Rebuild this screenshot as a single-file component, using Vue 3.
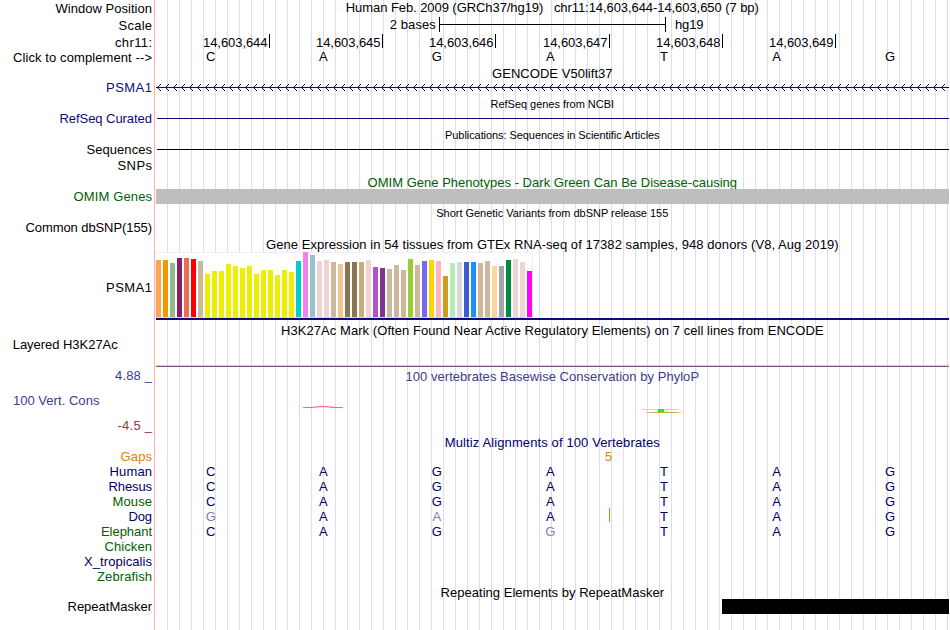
<script setup>
const NAVY = '#0c0c78';
const DEEP = '#000064';
const GREEN = '#006000';
const ORANGE = '#e68200';

// x values are local to the plot column, which starts at the pink divider
const GRID_LINES = Array.from({ length: 66 }, (_, i) => 12 + i * 12);
const ARROWS = Array.from({ length: 99 }, (_, i) => 2 + i * 8);
const BASE_X = [55.7, 168.3, 281.9, 395.3, 508.9, 621.5, 735];

const coords = [
    { text: '14,603,644', x: 114 },
    { text: '14,603,645', x: 227 },
    { text: '14,603,646', x: 340 },
    { text: '14,603,647', x: 454 },
    { text: '14,603,648', x: 567 },
    { text: '14,603,649', x: 680 },
];

const tissues = [
    ['#ffa54f', 57], ['#ee9a00', 57], ['#8fbc8f', 54], ['#8b1c62', 59], ['#ee6a50', 59], ['#ff0000', 58],
    ['#cdb79e', 56], ['#eeee00', 43], ['#eeee00', 46], ['#eeee00', 46], ['#eeee00', 53], ['#eeee00', 51],
    ['#eeee00', 49], ['#eeee00', 51], ['#eeee00', 43], ['#eeee00', 47], ['#eeee00', 47], ['#eeee00', 42],
    ['#eeee00', 47], ['#eeee00', 45], ['#00cdcd', 56], ['#ee82ee', 65], ['#9ac0cd', 62], ['#eed5d2', 56],
    ['#eed5d2', 57], ['#cdb79e', 55], ['#eec591', 53], ['#8b7355', 55], ['#8b7355', 55], ['#cdaa7d', 55],
    ['#eed5d2', 57], ['#b452cd', 50], ['#7a378b', 49], ['#cdb79e', 48], ['#cdb79e', 52], ['#cdb79e', 47],
    ['#9acd32', 58], ['#cdb79e', 52], ['#7a67ee', 56], ['#ffd700', 57], ['#ffb6c1', 56], ['#cd9b1d', 41],
    ['#b4eeb4', 54], ['#d9d9d9', 55], ['#3a5fcd', 55], ['#1e90ff', 55], ['#cdb79e', 54], ['#cdb79e', 56],
    ['#ffd39b', 51], ['#a6a6a6', 51], ['#008b45', 57], ['#eed5d2', 58], ['#eed5d2', 55], ['#ff00ff', 46],
];

const label = (text, w, y = 12, color = '#000', x = null) => ({ text, w, y, color, x });
const title = (text, w, y = 12, color = '#000', small = false) => ({ text, w, y, color, small });

const species = [
    ['Human', 42.5, DEEP, 'CAGATAG', ''],
    ['Rhesus', 43.5, DEEP, 'CAGATAG', ''],
    ['Mouse', 39.5, GREEN, 'CAGATAG', ''],
    ['Dog', 23.5, DEEP, 'GAAATAG', '02'],
    ['Elephant', 51, GREEN, 'CAGGTAG', '3'],
    ['Chicken', 47.5, GREEN, '', ''],
    ['X_tropicalis', 68, DEEP, '', ''],
    ['Zebrafish', 55, GREEN, '', ''],
];

const rows = [
    {
        h: 16,
        labels: [label('Window Position', 96.5, 13)],
        title: title('Human Feb. 2009 (GRCh37/hg19)   chr11:14,603,644-14,603,650 (7 bp)', 413),
    },
    { h: 17, labels: [label('Scale', 33.5, 14)], kind: 'scale' },
    { h: 17, labels: [label('chr11:', 37, 14)], kind: 'coords' },
    { h: 16, labels: [label('Click to complement -->', 139)], kind: 'bases', bases: 'CAGATAG', y: 11, color: '#000', dim: '' },
    { h: 14, title: title('GENCODE V50lift37', 120.5) },
    { h: 17, labels: [label('PSMA1', 46, 12, NAVY)], kind: 'gene' },
    { h: 14, title: title('RefSeq genes from NCBI', 123.5, 11, '#000', true) },
    { h: 16, labels: [label('RefSeq Curated', 92.5, 12, NAVY)], kind: 'line', color: NAVY },
    { h: 15, title: title('Publications: Sequences in Scientific Articles', 214.5, 12, '#000', true) },
    { h: 16, labels: [label('Sequences', 65.5)], kind: 'line', color: '#000' },
    { h: 16, labels: [label('SNPs', 34.5)] },
    { h: 15, title: title('OMIM Gene Phenotypes - Dark Green Can Be Disease-causing', 369.5, 13, GREEN) },
    { h: 16, labels: [label('OMIM Genes', 78.5, 12, GREEN)], kind: 'block', x: 1, color: '#bebebe' },
    { h: 15, title: title('Short Genetic Variants from dbSNP release 155', 232, 12, '#000', true) },
    { h: 17, labels: [label('Common dbSNP(155)', 126.5)] },
    { h: 15, title: title('Gene Expression in 54 tissues from GTEx RNA-seq of 17382 samples, 948 donors (V8, Aug 2019)', 572.5) },
    { h: 68, labels: [label('PSMA1', 46, 40)], kind: 'gtex' },
    { h: 18, title: title('H3K27Ac Mark (Often Found Near Active Regulatory Elements) on 7 cell lines from ENCODE', 542.5, 15) },
    { h: 29, labels: [label('Layered H3K27Ac', 105, 11, '#000', 12.7)], kind: 'h3k' },
    {
        h: 18,
        labels: [label('4.88 _', 37, 13, '#3c3c8c')],
        title: title('100 vertebrates Basewise Conservation by PhyloP', 293.5, 14, '#3c3c8c'),
    },
    {
        h: 49,
        labels: [label('100 Vert. Cons', 86.5, 20, '#3c3c8c', 12.9), label('-4.5 _', 34.5, 45, '#8c3c3c')],
        kind: 'phylop',
    },
    { h: 15, title: title('Multiz Alignments of 100 Vertebrates', 215, 13, DEEP) },
    { h: 15, labels: [label('Gaps', 31.5, 12, ORANGE)], kind: 'gaps' },
    ...species.map(([name, w, color, bases, dim]) => ({
        h: 15,
        labels: [label(name, w, 12, color)],
        kind: 'bases',
        bases,
        y: 12,
        color: DEEP,
        dim,
        insert: name === 'Dog',
    })),
    { h: 15, title: title('Repeating Elements by RepeatMasker', 223.5, 13) },
    { h: 31, labels: [label('RepeatMasker', 84.5)], kind: 'block', x: 567, color: '#000' },
];
</script>

<template>
    <main class="browser">
        <svg class="guides" width="794" height="630" aria-hidden="true">
            <rect x="-1" width="1" height="630" fill="#ffb0b0" />
            <rect v-for="x in GRID_LINES" :key="x" :x="x" width="1" height="630" fill="#dcdcfa" />
        </svg>

        <section v-for="(row, i) in rows" :key="i" class="track" :style="{ height: row.h + 'px' }">
            <svg class="side" width="155" :height="row.h">
                <text
                    v-for="l in row.labels"
                    :key="l.text"
                    :x="l.x ?? 152 - l.w"
                    :y="l.y"
                    :fill="l.color"
                    :textLength="l.w"
                >{{ l.text }}</text>
            </svg>

            <svg class="plot" width="794" :height="row.h">
                <text
                    v-if="row.title"
                    :class="{ small: row.title.small }"
                    :x="397.3 - row.title.w / 2"
                    :y="row.title.y"
                    :fill="row.title.color"
                    :textLength="row.title.w"
                >{{ row.title.text }}</text>

                <g v-if="row.kind === 'scale'">
                    <text x="234.8" y="13" textLength="46">2 bases</text>
                    <path d="M284.5 1v15M284.5 8.5H510.5M510.5 1v15" stroke="#000" fill="none" />
                    <text x="520" y="13" textLength="28.5">hg19</text>
                </g>

                <g v-else-if="row.kind === 'coords'">
                    <template v-for="c in coords" :key="c.x">
                        <text :x="c.x - 66" y="14" textLength="64.5">{{ c.text }}</text>
                        <rect :x="c.x" y="1" width="1" height="14" />
                    </template>
                </g>

                <g v-else-if="row.kind === 'bases'">
                    <text
                        v-for="(b, n) in row.bases"
                        :key="n"
                        :x="BASE_X[n]"
                        :y="row.y"
                        text-anchor="middle"
                        :fill="row.dim.includes(String(n)) ? '#8080b0' : row.color"
                    >{{ b }}</text>
                    <rect v-if="row.insert" x="454" y="-1" width="1" height="14" :fill="ORANGE" />
                </g>

                <g v-else-if="row.kind === 'gene'" :fill="NAVY">
                    <rect x="1" y="7" width="793" height="1" />
                    <path
                        v-for="x in ARROWS"
                        :key="x"
                        :d="`M${x + 1} 6h1v1h-1zM${x + 2} 5h1v1h-1zM${x + 3} 4h1v1h-1zM${x + 1} 8h1v1h-1zM${x + 2} 9h1v1h-1zM${x + 3} 10h1v1h-1z`"
                    />
                </g>

                <rect v-else-if="row.kind === 'line'" x="2" y="7" width="792" height="1" :fill="row.color" />

                <rect v-else-if="row.kind === 'block'" :x="row.x" :width="794 - row.x" height="15" :fill="row.color" />

                <g v-else-if="row.kind === 'gtex'">
                    <rect x="0.5" y="0.5" width="377" height="65" fill="#fff" stroke="#f0f0f0" />
                    <rect x="1" y="65" width="377" height="1" fill="#d8d8d8" />
                    <rect
                        v-for="([color, size], n) in tissues"
                        :key="n"
                        :x="1 + n * 7"
                        :y="65 - size"
                        width="5"
                        :height="size"
                        :fill="color"
                    />
                    <rect x="1" y="66" width="793" height="2" :fill="NAVY" />
                </g>

                <g v-else-if="row.kind === 'h3k'">
                    <rect x="1" y="27" width="793" height="1" fill="#f0cd8c" />
                    <rect x="1" y="28" width="793" height="1" fill="#735a78" />
                </g>

                <g v-else-if="row.kind === 'phylop'">
                    <path d="M148 22.6L158 22.3Q168 20.6 178 22.3L188 22.6Q178 22.8 174 22Q168 21.4 162 22Q156 22.8 148 22.6Z" fill="#ff2020" stroke="#ff3030" stroke-width="0.4" />
                    <rect x="487" y="24" width="37" height="1" fill="#a0f5a0" />
                    <path d="M489 27.5L497 27H503V28H497ZM503 27H520L529 27.5L520 28H503Z" fill="#b9af46" />
                    <rect x="503" y="24" width="6" height="3" fill="#00ff00" />
                </g>

                <text v-else-if="row.kind === 'gaps'" x="453.7" y="12" text-anchor="middle" :fill="ORANGE">5</text>
            </svg>
        </section>
    </main>
</template>

<style>
body {
    background: #fff;
}
</style>

<style scoped>
.browser {
    position: relative;
    display: flex;
    flex-direction: column;
    width: 949px;
    height: 630px;
    overflow: hidden;
    font-family: "Liberation Sans", Arial, Helvetica, sans-serif;
    font-size: 13px;
}

/* grid sits behind every track */
.guides {
    position: absolute;
    top: 0;
    left: 155px;
    overflow: visible;
}

.track {
    position: relative;
    display: grid;
    grid-template-columns: 155px 794px;
    flex: none;
}

.side,
.plot {
    display: block;
    overflow: visible;
}

text {
    white-space: pre;
}

.small {
    font-size: 11px;
}
</style>
